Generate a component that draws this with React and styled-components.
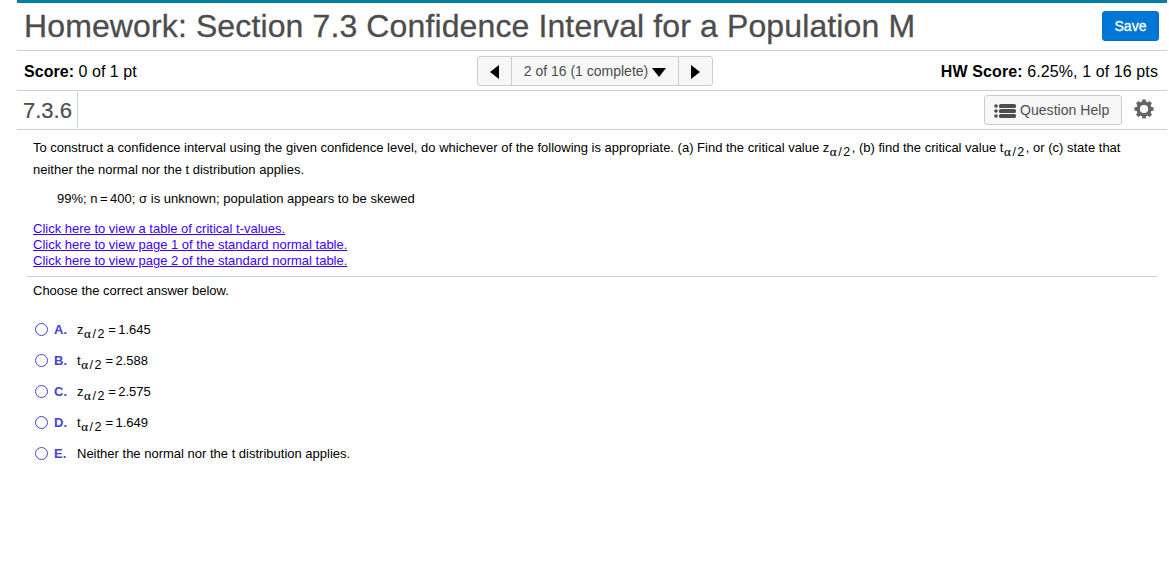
import styled, { createGlobalStyle } from "styled-components";

const GlobalStyle = createGlobalStyle`
  body {
    margin: 0;
    background: #fff;
    color: #000;
    font-family: "Liberation Sans", Arial, sans-serif;
    font-size: 13px;
  }
  * {
    box-sizing: border-box;
  }
`;

const Page = styled.div`
  width: 1150px;
  height: 561px;
  margin-left: 17px;
  border-top: 3px solid #007fa3;
  white-space: nowrap;
`;

const TitleBar = styled.header`
  display: flex;
  justify-content: space-between;
  height: 48px;
  padding: 8px 8px 0 7px;
  border-bottom: 1px solid #c7cfdf;
`;

const Title = styled.h1`
  margin: -3px 0 0;
  color: #4d4d4d;
  font-size: 32px;
  line-height: 36px;
  font-weight: 400;
  letter-spacing: 0.12px;
  -webkit-text-stroke: 0.3px #4d4d4d;
`;

const SaveButton = styled.button`
  width: 57px;
  height: 30px;
  padding: 0;
  border: 1px solid #0070cc;
  border-radius: 3px;
  background: #0076d6;
  color: #fff;
  font: 14px "Liberation Sans", Arial, sans-serif;
  -webkit-text-stroke: 0.3px #fff;
`;

const ScoreBar = styled.div`
  display: grid;
  grid-template-columns: 453px 236px 1fr;
  align-items: center;
  height: 40px;
  padding: 0 9px 0 7px;
  border-bottom: 1px solid #c7cfdf;
  font-size: 16px;
`;

const Score = styled.div`
  justify-self: ${(p) => p.$align};
  padding-top: 2px;
  letter-spacing: ${(p) => (p.$align === "end" ? 0.1 : 0.04)}px;
`;

const Pager = styled.div`
  display: flex;
  height: 30px;
  margin-top: 1px;
  border: 1px solid #ccc;
  border-radius: 3px;
  background: #f7f7f7;
`;

const PagerCell = styled.div`
  display: flex;
  align-items: center;
  justify-content: center;
  gap: 4px;
  width: ${(p) => p.$width}px;
  color: #4d4d4d;
  font-size: 14px;
  letter-spacing: 0;

  & + & {
    border-left: 1px solid #ccc;
  }
  svg {
    margin-top: 2px;
  }
`;

const SectionBar = styled.div`
  display: flex;
  align-items: center;
  height: 39px;
  border-bottom: 1px solid #c7cfdf;
`;

const SectionNumber = styled.div`
  width: 61px;
  height: 36px;
  padding-left: 6px;
  border-right: 1px solid #c7cfdf;
  color: #4d4d4d;
  font-size: 22px;
  line-height: 37px;
  -webkit-text-stroke: 0.2px #4d4d4d;
`;

const HelpButton = styled.button`
  display: flex;
  align-items: center;
  gap: 4px;
  width: 138px;
  height: 30px;
  margin-left: auto;
  padding: 0 0 0 9px;
  border: 1px solid #ccc;
  border-radius: 3px;
  background: #f7f7f7;
  color: #4d4d4d;
  font: 14px "Liberation Sans", Arial, sans-serif;
  letter-spacing: 0.05px;

  svg {
    margin-top: 2px;
  }
`;

const Gear = styled.svg`
  margin: -2px 13px 0 12px;
`;

const Question = styled.main`
  padding: 7px 0 0 16px;
`;

const Statement = styled.p`
  margin: 0;
  line-height: 22px;
`;

const Given = styled.p`
  margin: 7px 0 11px 24px;
  line-height: 22px;
  letter-spacing: 0.02px;
`;

const Tight = styled.span`
  word-spacing: -1.2px;
`;

const Sub = styled.span`
  position: relative;
  top: 4px;
  font-size: 12.5px;
  line-height: 1;
  letter-spacing: 1.5px;
`;

const Alpha = styled.span`
  margin-left: 0.5px;
  font-family: "Liberation Serif", serif;
  font-size: 13px;
  letter-spacing: 1.6px;
  -webkit-text-stroke: 0.15px #000;
`;

const Links = styled.div`
  display: flex;
  flex-direction: column;
  align-items: flex-start;
`;

const TableLink = styled.a`
  color: #3c00ff;
  line-height: 16px;
  text-decoration: underline;
`;

const Divider = styled.hr`
  height: 1px;
  margin: 7px 10px 3px -6px;
  border: 0;
  background: #c7d0dd;
`;

const Options = styled.div`
  display: flex;
  flex-direction: column;
  padding-top: 12px;
`;

const Option = styled.label`
  display: grid;
  grid-template-columns: 21px 23px 1fr;
  align-items: center;
  height: 31px;
`;

const Radio = styled.input`
  appearance: none;
  width: 13px;
  height: 13px;
  margin: 0 0 0 2px;
  border: 1px solid #4343d4;
  border-radius: 50%;
`;

const Letter = styled.b`
  color: #4343d4;
`;

const options = [
  { letter: "A", symbol: "z", value: "1.645" },
  { letter: "B", symbol: "t", value: "2.588" },
  { letter: "C", symbol: "z", value: "2.575" },
  { letter: "D", symbol: "t", value: "1.649" },
  { letter: "E", text: "Neither the normal nor the t distribution applies." },
];

const Critical = ({ symbol }) => (
  <>
    {symbol}
    <Sub>
      <Alpha>α</Alpha>/2
    </Sub>
  </>
);

const Arrow = ({ width, height, points }) => (
  <svg width={width} height={height}>
    <polygon points={points} fill="#000" />
  </svg>
);

const ListIcon = () => (
  <svg width="22" height="14" viewBox="0 0 22 14" fill="#4d4d4d">
    {[2, 7, 12].map((y) => (
      <g key={y}>
        <circle cx="2" cy={y} r="1.8" />
        <rect x="5" y={y - 2} width="17" height="4" rx="1.6" />
      </g>
    ))}
  </svg>
);

const GearIcon = () => (
  <Gear width="20" height="20" viewBox="-10 -10 20 20" fill="#666">
    {[0, 45, 90, 135, 180, 225, 270, 315].map((angle) => (
      <path key={angle} d="M-2.5-6L-1.6-9.6H1.6L2.5-6Z" transform={`rotate(${angle})`} />
    ))}
    <circle r="5.8" fill="none" stroke="#666" strokeWidth="3.4" />
  </Gear>
);

const App = () => {
  return (
    <>
      <GlobalStyle />
      <Page>
        <TitleBar>
          <Title>Homework: Section 7.3 Confidence Interval for a Population M</Title>
          <SaveButton>Save</SaveButton>
        </TitleBar>
        <ScoreBar>
          <Score $align="start">
            <b>Score:</b> 0 of 1 pt
          </Score>
          <Pager>
            <PagerCell $width={33}>
              <Arrow width={9} height={14} points="9,0 9,14 0,7" />
            </PagerCell>
            <PagerCell $width={167}>
              2 of 16 (1 complete)
              <Arrow width={14} height={9} points="0,0 14,0 7,9" />
            </PagerCell>
            <PagerCell $width={34}>
              <Arrow width={9} height={14} points="0,0 9,7 0,14" />
            </PagerCell>
          </Pager>
          <Score $align="end">
            <b>HW Score:</b> 6.25%, 1 of 16 pts
          </Score>
        </ScoreBar>
        <SectionBar>
          <SectionNumber>7.3.6</SectionNumber>
          <HelpButton>
            <ListIcon />
            Question Help
          </HelpButton>
          <GearIcon />
        </SectionBar>
        <Question>
          <Statement>
            To construct a confidence interval using the given confidence level, do whichever of the following is
            appropriate. (a) Find the critical value <Critical symbol="z" />, (b) find the critical value{" "}
            <Critical symbol="t" />, or (c) state that
            <br />
            neither the normal nor the t distribution applies.
          </Statement>
          <Given>
            99%; <Tight>n = 400;</Tight> σ is unknown; population appears to be skewed
          </Given>
          <Links>
            <TableLink href="#t">Click here to view a table of critical t-values.</TableLink>
            <TableLink href="#z1">Click here to view page 1 of the standard normal table.</TableLink>
            <TableLink href="#z2">Click here to view page 2 of the standard normal table.</TableLink>
          </Links>
          <Divider />
          <Statement>Choose the correct answer below.</Statement>
          <Options>
            {options.map((o) => (
              <Option key={o.letter}>
                <Radio type="radio" name="answer" />
                <Letter>{o.letter}.</Letter>
                <span>
                  {o.text || (
                    <Tight>
                      <Critical symbol={o.symbol} /> = {o.value}
                    </Tight>
                  )}
                </span>
              </Option>
            ))}
          </Options>
        </Question>
      </Page>
    </>
  );
};

export default App;
